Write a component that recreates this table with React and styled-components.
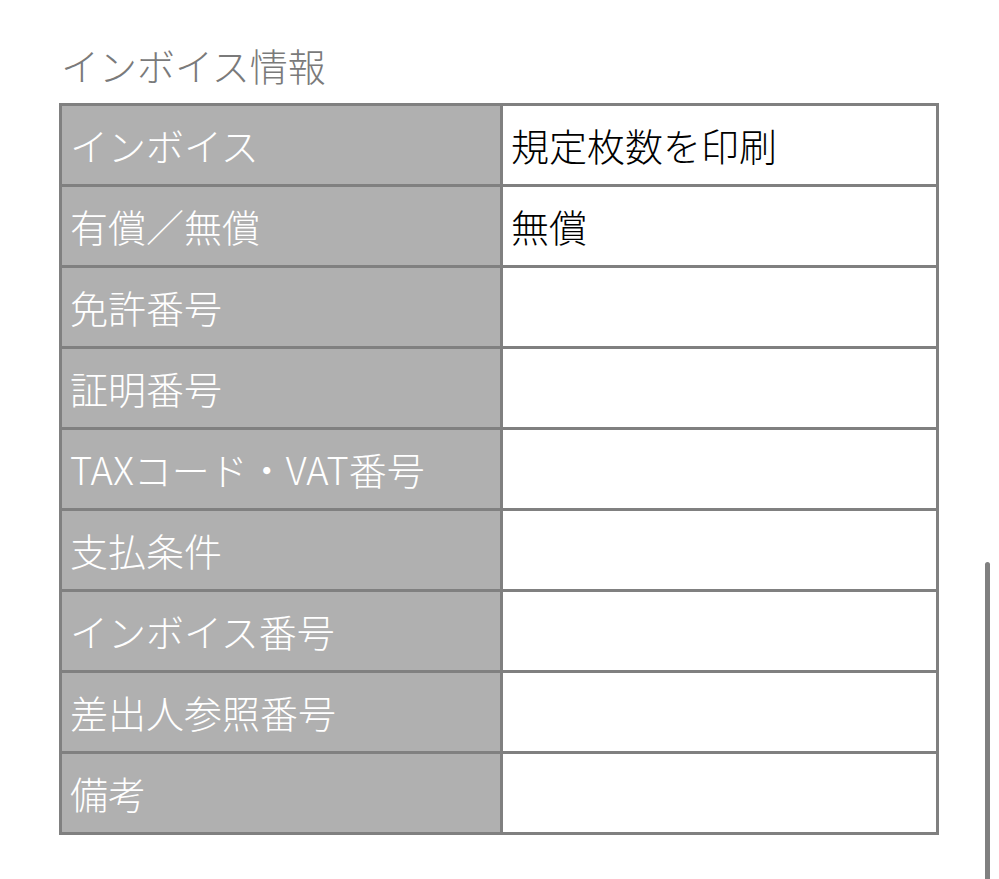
import React from "react";
import styled, { createGlobalStyle } from "styled-components";

const Global = createGlobalStyle`
  html, body { margin: 0; padding: 0; background: #ffffff; }
  body { font-family: "Noto Sans CJK JP", "Noto Sans", sans-serif; }
`;

const Page = styled.div`
  position: relative;
  width: 999px;
  height: 879px;
  overflow: hidden;
  box-sizing: border-box;
  padding: 43px 0 0 59px;
`;

const Title = styled.h2`
  margin: 0 0 16px 2px;
  font-size: 38px;
  font-weight: 300;
  line-height: 44px;
  color: #7a7a7a;
`;

const Table = styled.table`
  width: 880px;
  border-collapse: collapse;
  border: 3px solid #808080;
  table-layout: fixed;
`;

const Row = styled.tr`
  height: 81px;
`;

const Cell = styled.td`
  box-sizing: border-box;
  border: 3px solid #808080;
  padding: 0 0 0 8px;
  font-size: 38px;
  font-weight: 300;
  line-height: 1;
  vertical-align: middle;
  white-space: nowrap;
  background: ${(p) => (p.$head ? "#b0b0b0" : "#ffffff")};
  color: ${(p) => (p.$head ? "#ffffff" : "#000000")};
  width: ${(p) => (p.$head ? "441px" : "auto")};
`;

const ScrollThumb = styled.div`
  position: absolute;
  left: 985px;
  top: 562px;
  width: 5px;
  height: 330px;
  border-radius: 3px;
  background: #808080;
`;

const rows = [
  ["インボイス", "規定枚数を印刷"],
  ["有償／無償", "無償"],
  ["免許番号", ""],
  ["証明番号", ""],
  ["TAXコード・VAT番号", ""],
  ["支払条件", ""],
  ["インボイス番号", ""],
  ["差出人参照番号", ""],
  ["備考", ""],
];

export default function App() {
  return (
    <>
      <Global />
      <Page>
        <Title>インボイス情報</Title>
        <Table>
          <tbody>
            {rows.map(([k, v]) => (
              <Row key={k}>
                <Cell $head>{k}</Cell>
                <Cell>{v}</Cell>
              </Row>
            ))}
          </tbody>
        </Table>
        <ScrollThumb />
      </Page>
    </>
  );
}
